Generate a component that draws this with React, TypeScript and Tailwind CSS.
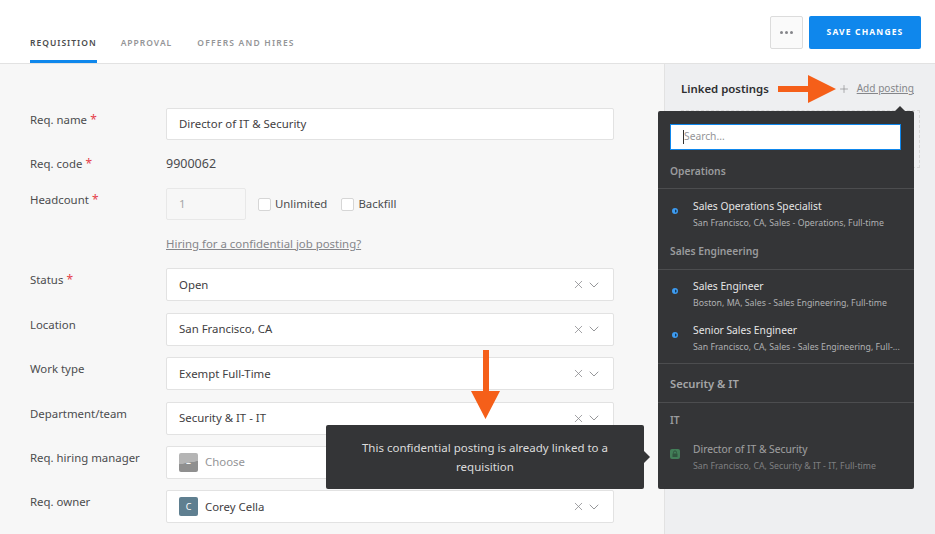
import { ChevronDown, Plus, X } from 'lucide-react'

const font = "font-['Noto_Sans',sans-serif]"

function Label({ text, required }: { text: string; required?: boolean }) {
  return (
    <div className="w-[136px] shrink-0 pt-[1px] text-[11.4px] leading-[16px] text-[#4b4c4e]">
      {text}
      {required && <span className="text-[12px] text-[#e5404a]"> *</span>}
    </div>
  )
}

function ClearAndChevron() {
  return (
    <>
      <X className="mr-[1px] h-[13px] w-[13px] text-[#85868a]" strokeWidth={1.4} />
      <ChevronDown className="h-[16px] w-[16px] text-[#85868a]" strokeWidth={1.3} />
    </>
  )
}

function SelectField({ label, value, required }: { label: string; value: string; required?: boolean }) {
  return (
    <div className="flex items-start h-[33px] mb-[11.5px]">
      <div className="pt-[3px]">
        <Label text={label} required={required} />
      </div>
      <div className="flex h-full w-[448px] items-center rounded-[2px] border border-[#e2e2e2] bg-white pl-[12px] pr-[11px] text-[11.4px] text-[#3f4042]">
        <span className="flex-1">{value}</span>
        <ClearAndChevron />
      </div>
    </div>
  )
}

function Posting({ title, sub, locked }: { title: string; sub: string; locked?: boolean }) {
  return (
    <div className={`flex h-[44px] items-start pl-[12px] pr-[14px] ${locked ? 'opacity-60' : ''}`}>
      <div className="w-[23px] shrink-0 pt-[15px]">
        {locked ? (
          <svg width="10" height="10" viewBox="0 0 10 10" className="-mt-[2px]">
            <rect width="10" height="10" rx="2" fill="#4caf6e" />
            <rect x="2.5" y="4.5" width="5" height="3.5" fill="#2f6b45" />
            <path d="M3.5 4.5V3.4a1.5 1.5 0 0 1 3 0v1.1" stroke="#2f6b45" fill="none" />
          </svg>
        ) : (
          <svg width="6" height="6" viewBox="0 0 6 6" className="ml-[2px]">
            <circle cx="3" cy="3" r="3" fill="#3d9bf0" />
            <path d="M3 1.4a1.6 1.6 0 0 1 0 3.2z" fill="#123a5e" />
          </svg>
        )}
      </div>
      <div className="min-w-0 flex-1 pt-[6px]">
        <div className="text-[10.25px] leading-[15px] text-[#e6e6e6]">{title}</div>
        <div className="whitespace-nowrap text-[8.75px] leading-[13px] mt-[3px] text-[#b0b1b3]">{sub}</div>
      </div>
    </div>
  )
}

function GroupHead({ text }: { text: string }) {
  return <div className="h-[14px] px-[12px] text-[10.25px] leading-[14px] font-semibold text-[#9a9b9d]">{text}</div>
}

export default function App() {
  return (
    <div className={`relative flex h-[534px] w-[935px] flex-col overflow-hidden bg-white ${font}`}>
      <header className="flex h-[64px] shrink-0 items-end justify-between border-b border-[#e2e2e2] bg-white pl-[30px] pr-[14px]">
        <nav className="flex gap-[24px] text-[8.5px] font-semibold tracking-[1px]">
          <div className="border-b-[3px] border-[#0f87ec] pb-[10px] text-[#4b4c4e]">REQUISITION</div>
          <div className="pb-[10px] text-[#949597]">APPROVAL</div>
          <div className="ml-[1px] pb-[10px] tracking-[1.2px] text-[#949597]">OFFERS AND HIRES</div>
        </nav>
        <div className="flex gap-[6px] self-start pt-[16px]">
          <button className="flex h-[33px] w-[33px] items-center justify-center gap-[2px] rounded-[2px] border border-[#dcdcdc] bg-[#fafafa]">
            <span className="h-[3px] w-[3px] rounded-full bg-[#85868a]" />
            <span className="h-[3px] w-[3px] rounded-full bg-[#85868a]" />
            <span className="h-[3px] w-[3px] rounded-full bg-[#85868a]" />
          </button>
          <button className="h-[33px] w-[112px] rounded-[2px] bg-[#0f87ec] text-[8.5px] font-bold tracking-[1.15px] text-white">
            SAVE CHANGES
          </button>
        </div>
      </header>

      <div className="flex min-h-0 flex-1">
        <main className="w-[664px] shrink-0 bg-[#f7f7f7] pl-[30px] pt-[44px]">
          <div className="flex items-start mb-[15px]">
            <div className="pt-[3px]">
              <Label text="Req. name" required />
            </div>
            <div className="flex h-[32px] w-[448px] items-center rounded-[2px] border border-[#e2e2e2] bg-white pl-[12px] text-[11.4px] text-[#3f4042]">
              Director of IT &amp; Security
            </div>
          </div>
          <div className="flex items-start mb-[16px] h-[17px]">
            <Label text="Req. code" required />
            <div className="pt-[1px] text-[12.5px] leading-[16px] text-[#4b4c4e]">9900062</div>
          </div>
          <div className="flex items-start mb-[16px]">
            <div className="pt-[3px]">
              <Label text="Headcount" required />
            </div>
            <div className="flex h-[32px] w-[80px] items-center rounded-[2px] border border-[#e8e8e8] bg-[#f7f7f7] pl-[12px] text-[11.4px] text-[#a5a6a8]">
              1
            </div>
            <label className="ml-[12px] flex h-[32px] items-center gap-[4px] text-[11.4px] text-[#4b4c4e]">
              <span className="h-[13px] w-[13px] rounded-[2px] border border-[#d6d6d6] bg-white" />
              Unlimited
            </label>
            <label className="ml-[14px] flex h-[32px] items-center gap-[4px] text-[11.4px] text-[#4b4c4e]">
              <span className="h-[13px] w-[13px] rounded-[2px] border border-[#d6d6d6] bg-white" />
              Backfill
            </label>
          </div>
          <div className="ml-[136px] mb-[16px] h-[16px] text-[11.4px] leading-[16px] text-[#85868a] underline">
            Hiring for a confidential job posting?
          </div>
          <SelectField label="Status" value="Open" required />
          <SelectField label="Location" value="San Francisco, CA" />
          <SelectField label="Work type" value="Exempt Full-Time" />
          <SelectField label="Department/team" value="Security & IT - IT" />
          <div className="flex items-start h-[33px] mb-[11px]">
            <div className="pt-[3px]">
              <Label text="Req. hiring manager" />
            </div>
            <div className="flex h-full w-[448px] items-center rounded-[2px] border border-[#e2e2e2] bg-white pb-[1px] pl-[12px] text-[11.4px] text-[#949597]">
              <span className="mr-[7px] flex h-[19px] w-[19px] items-center justify-center overflow-hidden rounded-[2px] bg-[linear-gradient(170deg,#b5b5b5_50%,#8f8f8f_52%)] text-[10px] text-white">
                –
              </span>
              Choose
            </div>
          </div>
          <div className="flex items-start h-[33px]">
            <div className="pt-[3px]">
              <Label text="Req. owner" />
            </div>
            <div className="flex h-full w-[448px] items-center rounded-[2px] border border-[#e2e2e2] bg-white pl-[12px] pr-[11px] text-[11.4px] text-[#3f4042]">
              <span className="mr-[7px] flex h-[19px] w-[19px] items-center justify-center rounded-[2px] bg-[#5f7f90] text-[9px] text-white">
                C
              </span>
              <span className="flex-1">Corey Cella</span>
              <ClearAndChevron />
            </div>
          </div>
        </main>

        <aside className="flex-1 border-l border-[#e2e2e2] bg-[#eeeff1] pl-[16px] pr-[15px] pt-[16px]">
          <div className="flex items-center justify-between h-[18px] pr-[6px]">
            <div className="text-[11.4px] font-semibold text-[#2d2e30]">Linked postings</div>
            <div className="flex items-center text-[10.1px] text-[#85868a]">
              <Plus className="mr-[7px] h-[12px] w-[12px]" strokeWidth={1.3} />
              <span className="underline">Add posting</span>
            </div>
          </div>
          <div className="mt-[12px] h-[58px] border border-dashed border-[#d8d8d8]" />
        </aside>
      </div>

      {/* posting picker */}
      <div className="absolute left-[658px] top-[111px] h-[378px] w-[256px] rounded-[2px] bg-[#343537]">
        <div className="absolute -top-[5px] right-[8px] h-0 w-0 border-x-[6px] border-b-[6px] border-x-transparent border-b-[#343537]" />
        <div className="px-[12px] pt-[13px]">
          <div className="flex h-[26px] w-[231px] items-center border border-[#0f87ec] bg-white pl-[12px] text-[10.25px] text-[#949597]">
            <span className="h-[14px] w-px bg-[#333]" />
            Search...
          </div>
        </div>
        <div className="mt-[14px]">
          <GroupHead text="Operations" />
          <div className="mt-[10px] border-t border-[#4c4d4f]" />
          <div className="mt-[4px]">
            <Posting title="Sales Operations Specialist" sub="San Francisco, CA, Sales - Operations, Full-time" />
          </div>
          <div className="mt-[7px]">
            <GroupHead text="Sales Engineering" />
          </div>
          <div className="mt-[11px] border-t border-[#4c4d4f]" />
          <div className="mt-[3px]">
            <Posting title="Sales Engineer" sub="Boston, MA, Sales - Sales Engineering, Full-time" />
            <Posting title="Senior Sales Engineer" sub="San Francisco, CA, Sales - Sales Engineering, Full-..." />
          </div>
          <div className="mt-[2px] border-t border-[#4c4d4f]" />
          <div className="h-[38px] px-[12px] pt-[12px] text-[11.2px] leading-[16px] font-semibold text-[#a5a6a8]">Security &amp; IT</div>
          <div className="border-t border-[#4c4d4f]" />
          <div className="mt-[10px]">
            <GroupHead text="IT" />
          </div>
          <div className="mt-[9px]">
            <Posting title="Director of IT & Security" sub="San Francisco, CA, Security & IT - IT, Full-time" locked />
          </div>
        </div>
      </div>

      {/* tooltip */}
      <div className="absolute left-[326px] top-[425px] flex h-[64px] w-[318px] items-center justify-center rounded-[2px] bg-[#343537] px-[30px] text-center text-[11.5px] leading-[19px] text-[#dcdcdc]">
        This confidential posting is already linked to a requisition
        <div className="absolute -right-[6px] top-[26px] h-0 w-0 border-y-[6px] border-l-[6px] border-y-transparent border-l-[#343537]" />
      </div>

      {/* annotation arrows */}
      <svg className="absolute left-[778px] top-[75px]" width="58" height="28" viewBox="0 0 58 28">
        <path d="M0 11h30V0l28 14-28 14V17H0z" fill="#f55f19" />
      </svg>
      <svg className="absolute left-[471px] top-[350px]" width="29" height="69" viewBox="0 0 29 69">
        <path d="M12 0h6v41h11L14.5 69 0 41h12z" fill="#f55f19" />
      </svg>
    </div>
  )
}
